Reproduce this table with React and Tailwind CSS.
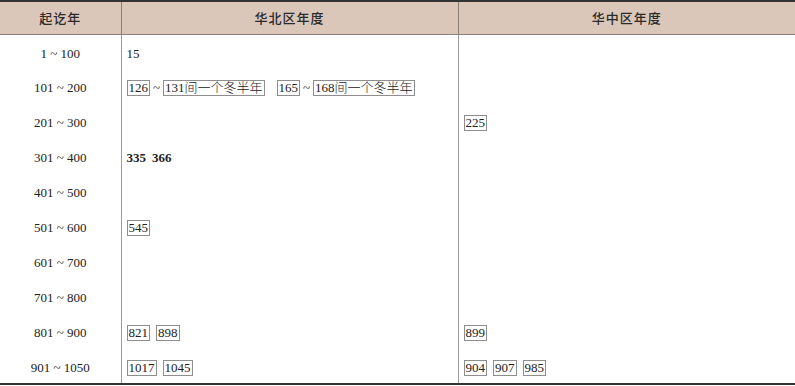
const rows = [
  { range: '1 ~ 100', north: [{ t: '15' }], central: [] },
  {
    range: '101 ~ 200',
    north: 'span',
    central: [],
  },
  { range: '201 ~ 300', north: [], central: [{ t: '225', box: true }] },
  { range: '301 ~ 400', north: 'bold', central: [] },
  { range: '401 ~ 500', north: [], central: [] },
  { range: '501 ~ 600', north: [{ t: '545', box: true }], central: [] },
  { range: '601 ~ 700', north: [], central: [] },
  { range: '701 ~ 800', north: [], central: [] },
  { range: '801 ~ 900', north: [{ t: '821', box: true }, { t: '898', box: true }], central: [{ t: '899', box: true }] },
  {
    range: '901 ~ 1050',
    north: [{ t: '1017', box: true }, { t: '1045', box: true }],
    central: [{ t: '904', box: true }, { t: '907', box: true }, { t: '985', box: true }],
  },
];

function Box({ children }) {
  return (
    <span className="inline-block border border-[#8e8e8e] px-px leading-[14px]">{children}</span>
  );
}

function Cell({ items }) {
  if (items === 'bold') {
    return (
      <span className="flex gap-[6px] font-bold">
        <span>335</span>
        <span>366</span>
      </span>
    );
  }
  if (items === 'span') {
    return (
      <span className="flex items-center">
        <Box>126</Box>
        <span className="mx-[3px]">~</span>
        <Box>
          131<span className="font-light">间一个冬半年</span>
        </Box>
        <span className="w-[12px]" />
        <Box>165</Box>
        <span className="mx-[3px]">~</span>
        <Box>
          168<span className="font-light">间一个冬半年</span>
        </Box>
      </span>
    );
  }
  return (
    <span className="flex items-center gap-[6px]">
      {items.map((it, i) => (it.box ? <Box key={i}>{it.t}</Box> : <span key={i}>{it.t}</span>))}
    </span>
  );
}

export default function App() {
  return (
    <div className="w-[795px] h-[386px] bg-white overflow-hidden">
      <table
        className="w-full border-collapse text-[13px] text-[#222] border-t-2 border-b-2 border-[#333]"
        style={{ fontFamily: '"Liberation Serif", "Noto Sans CJK SC", serif' }}
      >
        <thead>
          <tr
            className="h-[33px] bg-[#dbc7b9] border-b border-[#8a807a] text-[#2a2a2a] tracking-[1px]"
            style={{ fontFamily: '"Noto Sans CJK SC", sans-serif' }}
          >
            <th className="w-[121px] font-medium text-center border-r border-[#8a807a]">起讫年</th>
            <th className="w-[337px] font-medium text-center border-r border-[#8a807a]">华北区年度</th>
            <th className="font-medium text-center">华中区年度</th>
          </tr>
        </thead>
        <tbody>
          {rows.map((r) => (
            <tr key={r.range} className="h-[35px]">
              <td className="text-center border-r border-[#9a9a9a] pt-[3px]">{r.range}</td>
              <td className="pl-[5px] border-r border-[#9a9a9a] pt-[3px]">
                <Cell items={r.north} />
              </td>
              <td className="pl-[5px] pt-[3px]">
                <Cell items={r.central} />
              </td>
            </tr>
          ))}
        </tbody>
      </table>
    </div>
  );
}
